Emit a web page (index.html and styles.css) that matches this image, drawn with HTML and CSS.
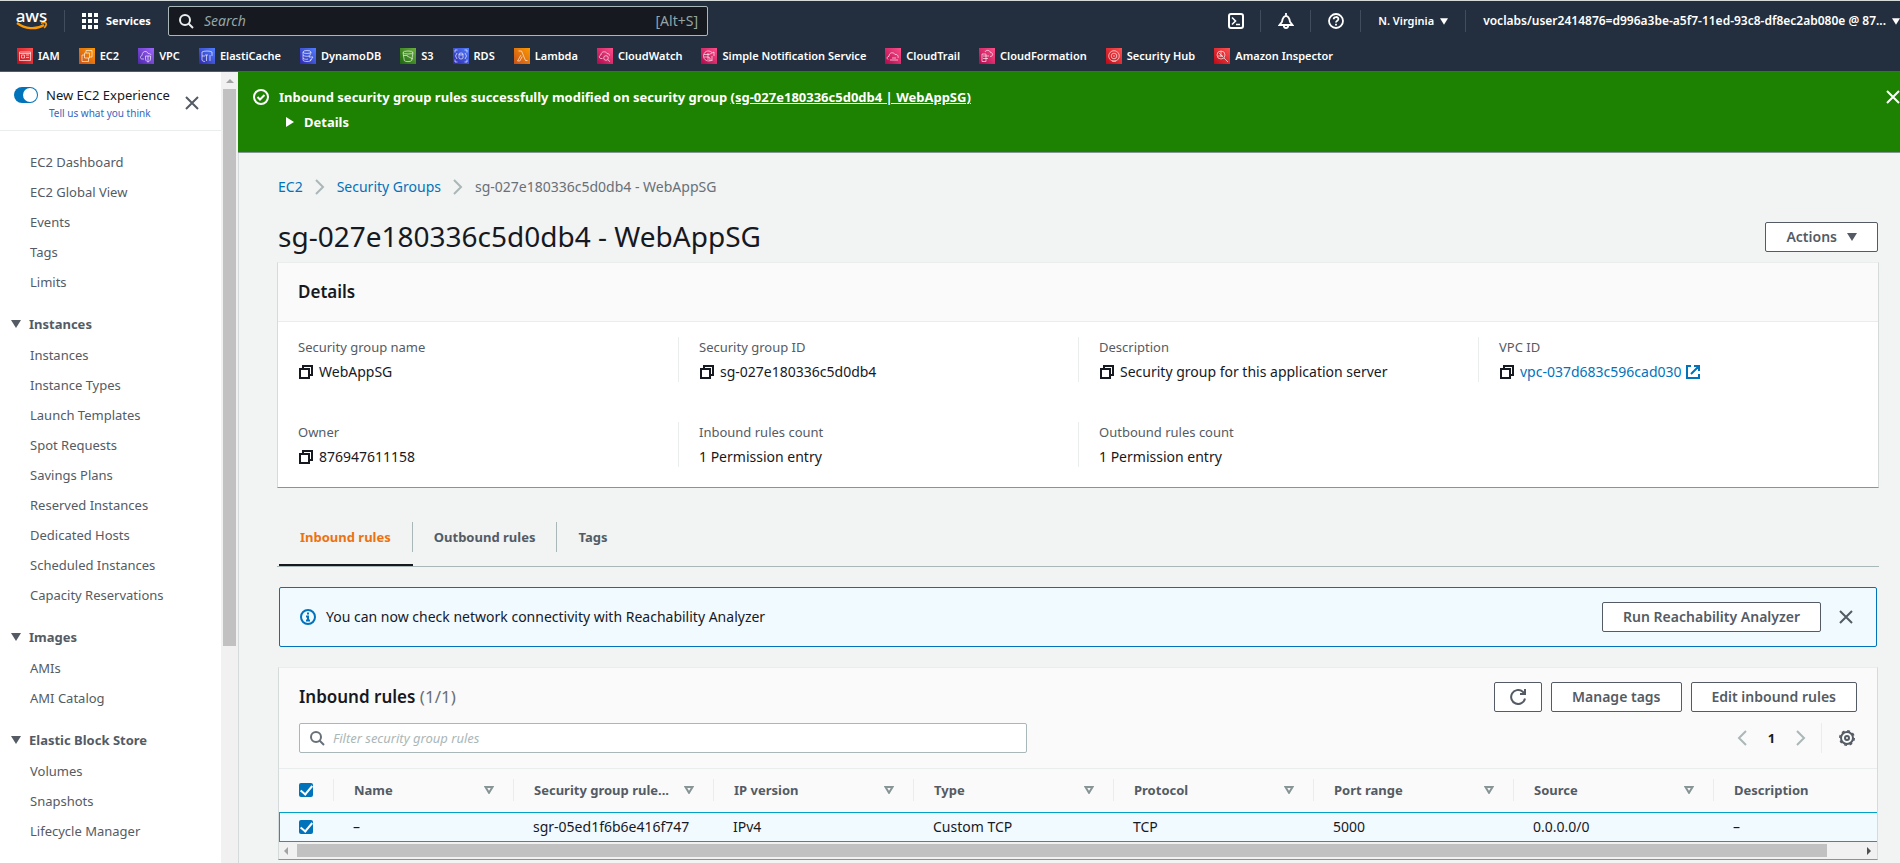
FILE: index.html
```html
<!DOCTYPE html>
<html lang="en">
<head>
<meta charset="utf-8">
<title>SecurityGroup | EC2 Management Console</title>
<link rel="stylesheet" href="styles.css">
</head>
<body>
<svg class="defs" aria-hidden="true">
  <defs>
    <linearGradient id="g-red" x1="0" y1="1" x2="1" y2="0"><stop offset="0" stop-color="#bd0816"/><stop offset="1" stop-color="#ff5252"/></linearGradient>
    <linearGradient id="g-orange" x1="0" y1="1" x2="1" y2="0"><stop offset="0" stop-color="#c8511b"/><stop offset="1" stop-color="#ff9900"/></linearGradient>
    <linearGradient id="g-purple" x1="0" y1="1" x2="1" y2="0"><stop offset="0" stop-color="#4d27a8"/><stop offset="1" stop-color="#a166ff"/></linearGradient>
    <linearGradient id="g-blue" x1="0" y1="1" x2="1" y2="0"><stop offset="0" stop-color="#2e27ad"/><stop offset="1" stop-color="#527fff"/></linearGradient>
    <linearGradient id="g-green" x1="0" y1="1" x2="1" y2="0"><stop offset="0" stop-color="#1b660f"/><stop offset="1" stop-color="#6cae3e"/></linearGradient>
    <linearGradient id="g-pink" x1="0" y1="1" x2="1" y2="0"><stop offset="0" stop-color="#b0084d"/><stop offset="1" stop-color="#ff4f8b"/></linearGradient>
    <symbol id="i-copy" viewBox="0 0 16 16"><path d="M2 5h9v9H2zM5 5V2h9v9h-3" fill="none" stroke="currentColor" stroke-width="2"/></symbol>
    <symbol id="i-close" viewBox="0 0 16 16"><path d="M2 2l12 12M14 2L2 14" fill="none" stroke="currentColor" stroke-width="2"/></symbol>
    <symbol id="i-search" viewBox="0 0 16 16"><circle cx="7" cy="7" r="5" fill="none" stroke="currentColor" stroke-width="2"/><path d="M15 15l-4.500-4.500" stroke="currentColor" stroke-width="2"/></symbol>
    <symbol id="i-right" viewBox="0 0 16 16"><path d="M4 1l7 7-7 7" fill="none" stroke="currentColor" stroke-width="2"/></symbol>
    <symbol id="i-left" viewBox="0 0 16 16"><path d="M12 1L5 8l7 7" fill="none" stroke="currentColor" stroke-width="2"/></symbol>
    <symbol id="i-down" viewBox="0 0 10 8"><path d="M0 0h10L5 8z" fill="currentColor"/></symbol>
    <symbol id="i-filter" viewBox="0 0 10 8"><path d="M1.500 1h7L5 6.800z" fill="none" stroke="currentColor" stroke-width="2"/></symbol>
  </defs>
</svg>

<header class="topnav">
  <div class="topnav-main">
    <a class="logo" href="#" aria-label="AWS">
      <span class="logo-word">aws</span>
      <svg class="logo-smile" viewBox="0 0 32 9"><path d="M1 1c8 6 19 7 27 2" fill="none" stroke="#f90" stroke-width="2.200"/><path d="M25 1.200c2-.6 4.500-.6 5 0s-.2 3-1.800 4.800" fill="none" stroke="#f90" stroke-width="1.600"/></svg>
    </a>
    <button class="services" type="button">
      <svg width="16" height="16" viewBox="0 0 16 16" fill="#fff"><path d="M0 0h4v4H0zM6 0h4v4H6zM12 0h4v4h-4zM0 6h4v4H0zM6 6h4v4H6zM12 6h4v4h-4zM0 12h4v4H0zM6 12h4v4H6zM12 12h4v4h-4z"/></svg>
      Services
    </button>
    <label class="search">
      <svg width="16" height="16"><use href="#i-search"/></svg>
      <input type="text" placeholder="Search" aria-label="Search">
      <span>[Alt+S]</span>
    </label>
    <div class="tools">
      <button type="button" class="tool" aria-label="CloudShell"><svg width="16" height="16" viewBox="0 0 16 16" fill="none" stroke="#fff" stroke-width="2"><rect x="1" y="1" width="14" height="14" rx="2"/><path d="M4 4.500L7.500 8 4 11.500M8 11.500h4" stroke-width="1.600"/></svg></button>
      <button type="button" class="tool" aria-label="Notifications"><svg width="16" height="16" viewBox="0 0 16 16" fill="none" stroke="#fff" stroke-width="1.800"><path d="M8 0v3M1.500 12h13L12 8.800C11.300 4.800 10 3 8 3S4.700 4.800 4 8.800zM5.800 12.500c0 3.300 4.400 3.300 4.400 0"/></svg></button>
      <button type="button" class="tool" aria-label="Help"><svg width="16" height="16" viewBox="0 0 16 16" fill="none" stroke="#fff" stroke-width="1.800"><circle cx="8" cy="8" r="7"/><path d="M5.700 6.300c0-3 4.700-3 4.700-.2C10.400 7.800 8 7.600 8 9.600M8 10.800v1.800"/></svg></button>
      <button type="button" class="tool text">N. Virginia <svg width="8" height="7"><use href="#i-down"/></svg></button>
      <button type="button" class="tool text account">voclabs/user2414876=d996a3be-a5f7-11ed-93c8-df8ec2ab080e @ 87... <svg width="8" height="7"><use href="#i-down"/></svg></button>
    </div>
  </div>
  <nav class="shortcuts">
    <a href="#"><svg viewBox="0 0 16 16"><rect width="16" height="16" fill="url(#g-red)"/><path d="M2.500 4h11v8.500h-11zM4.500 7h3v3h-3zM9 7h3M9 9.500h3M2.500 5.500h11"/></svg>IAM</a>
    <a href="#"><svg viewBox="0 0 16 16"><rect width="16" height="16" fill="url(#g-orange)"/><path d="M5.500 5h5v5h-5zM5.500 7H3v6.500h6.500V10M7 5V2.500h6V9h-2.500"/></svg>EC2</a>
    <a href="#"><svg viewBox="0 0 16 16"><rect width="16" height="16" fill="url(#g-purple)"/><path d="M6 11H4c-2 0-2-3 0-3.500C4 3 9 2 10 5.500c3 0 3 1.500 3 1.500M7.500 8h5v3c0 2-2.500 3-2.500 3s-2.500-1-2.500-3zM10 8v6"/></svg>VPC</a>
    <a href="#"><svg viewBox="0 0 16 16"><rect width="16" height="16" fill="url(#g-blue)"/><path d="M3 4c1.500-1.300 8.500-1.300 10 0v2M3 4v8c0 1 2 1.500 3 1.500M3 8h3M6 7h3M7.500 7v6M11 7v6M12 7h2"/></svg>ElastiCache</a>
    <a href="#"><svg viewBox="0 0 16 16"><rect width="16" height="16" fill="url(#g-blue)"/><ellipse cx="7" cy="4" rx="4" ry="1.500"/><path d="M3 4v8c0 2 8 2 8 0v-1M11 4v1M3 7c1 1.500 5 1.500 6 1M3 10c1 1.500 4 1.500 5 1M11 5l-2 4h4l-3 4"/></svg>DynamoDB</a>
    <a href="#"><svg viewBox="0 0 16 16"><rect width="16" height="16" fill="url(#g-green)"/><ellipse cx="8" cy="4.500" rx="5" ry="1.500"/><path d="M3 4.500l1.300 8c1 1.500 6.400 1.500 7.400 0l1.300-8M7 8l6 3M3.500 7.500h4"/></svg>S3</a>
    <a href="#"><svg viewBox="0 0 16 16"><rect width="16" height="16" fill="url(#g-blue)"/><ellipse cx="8" cy="6" rx="2" ry="1"/><path d="M6 6v4c0 1.300 4 1.300 4 0V6M2 4.500V2h2.500M11.500 2H14v2.500M14 11.500V14h-2.500M4.500 14H2v-2.500M4 5L2.500 8 4 11M12 5l1.500 3-1.500 3"/></svg>RDS</a>
    <a href="#"><svg viewBox="0 0 16 16"><rect width="16" height="16" fill="url(#g-orange)"/><path d="M4.500 3h3l4 9.500h2M7 7l-3.500 6h2.300l2.400-4.500"/></svg>Lambda</a>
    <a href="#"><svg viewBox="0 0 16 16"><rect width="16" height="16" fill="url(#g-pink)"/><path d="M5.500 10.500H4c-2.300 0-2-3.300 0-3.500 0-4 5-4 6-1.500 2 0 2.500 1 2.500 2"/><circle cx="9" cy="10" r="2.300"/><path d="M10.800 11.700l2.200 2"/></svg>CloudWatch</a>
    <a href="#"><svg viewBox="0 0 16 16"><rect width="16" height="16" fill="url(#g-pink)"/><path d="M11 4.500C7 1 2.500 4 2.500 8S7 14.500 11 12M3 6.500h5L13 4v4M3 9h4l2 1v3M7 5v7M11 8v5"/></svg>Simple Notification Service</a>
    <a href="#"><svg viewBox="0 0 16 16"><rect width="16" height="16" fill="url(#g-pink)"/><path d="M3 11.500c-1.500-1-1-3 1-3.200C4 4 9 4 10 6.500c3-.5 3.500 2.200 3 3.500M5 12h8M7 10h4"/></svg>CloudTrail</a>
    <a href="#"><svg viewBox="0 0 16 16"><rect width="16" height="16" fill="url(#g-pink)"/><path d="M3 6h4v7.500H3zM4 8h6M4 10.500h5M6 4c1-2.500 5-2 5.500.5 3 0 2.500 4 0 4H11"/></svg>CloudFormation</a>
    <a href="#"><svg viewBox="0 0 16 16"><rect width="16" height="16" fill="url(#g-red)"/><circle cx="8" cy="8" r="5.300"/><circle cx="8" cy="8" r="2.800"/><path d="M8 7v2M6 13h4"/></svg>Security Hub</a>
    <a href="#"><svg viewBox="0 0 16 16"><rect width="16" height="16" fill="url(#g-red)"/><circle cx="7" cy="7" r="4"/><path d="M10 10l4 4M5 5l4 4M7 3v6M4 8h5"/></svg>Amazon Inspector</a>
  </nav>
</header>

<div class="layout">
  <aside class="sidebar">
    <div class="side-content">
      <div class="side-head">
        <label class="toggle"><input type="checkbox" role="switch" checked aria-label="New EC2 Experience"></label>
        <div class="side-title"><span>New EC2 Experience</span><a href="#">Tell us what you think</a></div>
        <button class="icon-btn" type="button" aria-label="Close navigation"><svg width="16" height="16"><use href="#i-close"/></svg></button>
      </div>
      <nav class="side-nav">
        <ul>
          <li><a href="#">EC2 Dashboard</a></li><li><a href="#">EC2 Global View</a></li><li><a href="#">Events</a></li><li><a href="#">Tags</a></li><li><a href="#">Limits</a></li>
        </ul>
        <h3><svg width="10" height="8"><use href="#i-down"/></svg>Instances</h3>
        <ul>
          <li><a href="#">Instances</a></li><li><a href="#">Instance Types</a></li><li><a href="#">Launch Templates</a></li><li><a href="#">Spot Requests</a></li><li><a href="#">Savings Plans</a></li><li><a href="#">Reserved Instances</a></li><li><a href="#">Dedicated Hosts</a></li><li><a href="#">Scheduled Instances</a></li><li><a href="#">Capacity Reservations</a></li>
        </ul>
        <h3><svg width="10" height="8"><use href="#i-down"/></svg>Images</h3>
        <ul>
          <li><a href="#">AMIs</a></li><li><a href="#">AMI Catalog</a></li>
        </ul>
        <h3><svg width="10" height="8"><use href="#i-down"/></svg>Elastic Block Store</h3>
        <ul>
          <li><a href="#">Volumes</a></li><li><a href="#">Snapshots</a></li><li><a href="#">Lifecycle Manager</a></li>
        </ul>
      </nav>
    </div>
    <div class="vscroll" aria-hidden="true"><svg width="8" height="4" viewBox="0 0 8 4"><path d="M4 0l4 4H0z" fill="#a3a3a3"/></svg><div class="vthumb"></div></div>
  </aside>

  <main>
    <section class="flash">
      <svg class="flash-icon" width="16" height="16" viewBox="0 0 16 16" fill="none" stroke="#fff" stroke-width="2"><circle cx="8" cy="8" r="7"/><path d="M4.500 8l2.500 2.500 4.500-4.500"/></svg>
      <div class="flash-body">
        <p>Inbound security group rules successfully modified on security group <a href="#">(sg-027e180336c5d0db4 | WebAppSG)</a></p>
        <button type="button"><svg width="8" height="10" viewBox="0 0 8 10"><path d="M0 0l8 5-8 5z" fill="#fff"/></svg>Details</button>
      </div>
      <button class="icon-btn" type="button" aria-label="Dismiss"><svg width="16" height="16"><use href="#i-close"/></svg></button>
    </section>

    <div class="page">
      <nav class="crumbs">
        <a href="#">EC2</a><svg width="16" height="16"><use href="#i-right"/></svg><a href="#">Security Groups</a><svg width="16" height="16"><use href="#i-right"/></svg><span>sg-027e180336c5d0db4 - WebAppSG</span>
      </nav>
      <div class="title-row">
        <h1>sg-027e180336c5d0db4 - WebAppSG</h1>
        <button class="btn" type="button">Actions <svg width="10" height="8"><use href="#i-down"/></svg></button>
      </div>

      <section class="panel">
        <h2 class="panel-head">Details</h2>
        <dl class="details">
          <div><dt>Security group name</dt><dd><svg width="16" height="16"><use href="#i-copy"/></svg>WebAppSG</dd></div>
          <div><dt>Security group ID</dt><dd><svg width="16" height="16"><use href="#i-copy"/></svg>sg-027e180336c5d0db4</dd></div>
          <div><dt>Description</dt><dd><svg width="16" height="16"><use href="#i-copy"/></svg>Security group for this application server</dd></div>
          <div><dt>VPC ID</dt><dd><svg width="16" height="16"><use href="#i-copy"/></svg><a href="#">vpc-037d683c596cad030 <svg width="16" height="16" viewBox="0 0 16 16" fill="none" stroke="currentColor" stroke-width="2"><path d="M6 2H2v12h12v-4M9 2h5v5M14 2L6 10"/></svg></a></dd></div>
          <div><dt>Owner</dt><dd><svg width="16" height="16"><use href="#i-copy"/></svg>876947611158</dd></div>
          <div><dt>Inbound rules count</dt><dd>1 Permission entry</dd></div>
          <div><dt>Outbound rules count</dt><dd>1 Permission entry</dd></div>
        </dl>
      </section>

      <div class="tabs" role="tablist">
        <button type="button" role="tab" aria-selected="true"><span>Inbound rules</span></button>
        <button type="button" role="tab" aria-selected="false"><span>Outbound rules</span></button>
        <button type="button" role="tab" aria-selected="false"><span>Tags</span></button>
      </div>

      <section class="info">
        <svg width="16" height="16" viewBox="0 0 16 16" fill="none" stroke="#0073bb" stroke-width="2"><circle cx="8" cy="8" r="7"/><path d="M8 3.500v2M6 7.500h2v4M6 11.500h4"/></svg>
        <p>You can now check network connectivity with Reachability Analyzer</p>
        <button class="btn" type="button">Run Reachability Analyzer</button>
        <button class="icon-btn" type="button" aria-label="Dismiss"><svg width="16" height="16"><use href="#i-close"/></svg></button>
      </section>

      <section class="panel rules">
        <div class="rules-head">
          <h2>Inbound rules <span>(1/1)</span></h2>
          <div class="actions">
            <button class="btn refresh" type="button" aria-label="Refresh"><svg width="16" height="16" viewBox="0 0 16 16" fill="none" stroke="currentColor" stroke-width="2"><path d="M15 9.500A7 7 0 1 1 12.500 2.500L15 5M15 0v5h-5"/></svg></button>
            <button class="btn" type="button">Manage tags</button>
            <button class="btn" type="button">Edit inbound rules</button>
          </div>
        </div>
        <div class="rules-tools">
          <label class="filter"><svg width="16" height="16"><use href="#i-search"/></svg><input type="text" placeholder="Filter security group rules" aria-label="Filter security group rules"></label>
          <div class="pager">
            <button type="button" aria-label="Previous page"><svg width="16" height="16"><use href="#i-left"/></svg></button>
            <button type="button" class="current">1</button>
            <button type="button" aria-label="Next page"><svg width="16" height="16"><use href="#i-right"/></svg></button>
            <button type="button" class="gear" aria-label="Preferences"><svg width="16" height="16" viewBox="0 0 16 16" fill="none" stroke="currentColor"><circle cx="8" cy="8" r="6" stroke-width="2"/><circle cx="8" cy="8" r="7.200" stroke-width="1.600" stroke-dasharray="2.827 2.827"/><circle cx="8" cy="8" r="2" stroke-width="2"/></svg></button>
          </div>
        </div>
        <div class="table-wrap">
          <table>
            <colgroup><col class="c-check"><col class="c-name"><col class="c-std"><col class="c-std"><col class="c-std"><col class="c-std"><col class="c-std"><col class="c-std"><col class="c-std"></colgroup>
            <thead>
              <tr>
                <th><input type="checkbox" checked aria-label="Select all"></th>
                <th><div><span>Name</span><svg width="10" height="8"><use href="#i-filter"/></svg></div></th>
                <th><div><span>Security group rule...</span><svg width="10" height="8"><use href="#i-filter"/></svg></div></th>
                <th><div><span>IP version</span><svg width="10" height="8"><use href="#i-filter"/></svg></div></th>
                <th><div><span>Type</span><svg width="10" height="8"><use href="#i-filter"/></svg></div></th>
                <th><div><span>Protocol</span><svg width="10" height="8"><use href="#i-filter"/></svg></div></th>
                <th><div><span>Port range</span><svg width="10" height="8"><use href="#i-filter"/></svg></div></th>
                <th><div><span>Source</span><svg width="10" height="8"><use href="#i-filter"/></svg></div></th>
                <th><div><span>Description</span></div></th>
              </tr>
            </thead>
            <tbody>
              <tr>
                <td><input type="checkbox" checked aria-label="Select sgr-05ed1f6b6e416f747"></td>
                <td>–</td><td>sgr-05ed1f6b6e416f747</td><td>IPv4</td><td>Custom TCP</td><td>TCP</td><td>5000</td><td>0.0.0.0/0</td><td>–</td>
              </tr>
            </tbody>
          </table>
        </div>
        <div class="hscroll" aria-hidden="true"><svg width="4" height="8" viewBox="0 0 4 8"><path d="M4 0v8L0 4z" fill="#a3a3a3"/></svg><div class="htrack"><div class="hthumb"></div></div><svg width="4" height="8" viewBox="0 0 4 8"><path d="M0 0v8l4-4z" fill="#505050"/></svg></div>
      </section>
    </div>
  </main>
</div>
</body>
</html>
```
FILE: styles.css
```css
:root {
  --ink: #16191f;
  --muted: #545b64;
  --link: #0073bb;
  --line: #eaeded;
  --nav: #232f3e;
}
* { box-sizing: border-box; }
body {
  margin: 0;
  height: 100vh;
  display: flex;
  flex-direction: column;
  overflow: hidden;
  font: 14px/20px "Noto Sans", "Open Sans", sans-serif;
  color: var(--ink);
  background: #f2f3f3;
}
h1, h2, h3, p, ul, dl, dd { margin: 0; padding: 0; }
ul { list-style: none; }
a { color: var(--link); text-decoration: none; }
svg { flex: none; display: block; }
button, input { font: inherit; color: inherit; }
button { background: none; border: 0; padding: 0; cursor: pointer; }
.defs { position: absolute; width: 0; height: 0; }

/* Top navigation */
.topnav {
  background: var(--nav);
  border-top: 1px solid #d5dbdb;
  border-bottom: 1px solid #545b64;
  color: #fff;
  font-size: 11px;
  font-weight: 600;
}
.topnav-main { display: flex; align-items: center; height: 40px; padding-left: 16px; }
.logo {
  display: flex;
  flex-direction: column;
  align-items: center;
  width: 49px;
  height: 22px;
  padding-right: 17px;
  border-right: 1px solid #414d5c;
  color: #fff;
}
.logo-word { font-size: 17px; line-height: 12px; font-weight: 500; }
.logo-smile { width: 32px; height: 9px; }
.services { display: flex; align-items: center; gap: 8px; width: 103px; padding-left: 17px; font-weight: 700; }
.search {
  display: flex;
  align-items: center;
  gap: 10px;
  width: 540px;
  height: 30px;
  padding: 0 9px;
  border: 1px solid #aab7b8;
  border-radius: 2px;
  background: #16191f;
  color: #95a5a6;
  font-size: 14px;
  font-weight: 400;
}
.search svg { color: #eaeded; }
.search input { flex: 1; min-width: 0; border: 0; padding: 0; background: none; outline: 0; }
.search input::placeholder { color: #95a5a6; font-style: italic; }
.tools { display: flex; margin-left: auto; }
.tool { display: flex; align-items: center; gap: 6px; height: 22px; padding: 0 16px 0 17px; border-right: 1px solid #414d5c; white-space: nowrap; }
.tool.text { padding: 0 17px; }
.tool.account { padding-right: 0; border-right: 0; font-size: 12px; }
.shortcuts { display: flex; gap: 19px; height: 30px; align-items: center; padding-left: 17px; }
.shortcuts a { display: flex; align-items: center; gap: 5px; color: #fff; white-space: nowrap; }
.shortcuts svg { width: 16px; height: 16px; fill: none; stroke: #fff; stroke-width: 0.7; stroke-opacity: 0.9; }
.shortcuts rect { stroke: none; }

/* Side navigation */
.layout { flex: 1; display: flex; min-height: 0; }
.sidebar { flex: none; display: flex; width: 239px; background: #fff; border-right: 1px solid #d5dbdb; overflow: hidden; }
.side-content { flex: 1; min-width: 0; }
.side-head { display: flex; height: 59px; padding: 13px 21px 0 14px; border-bottom: 1px solid var(--line); }
.toggle { padding-top: 2px; }
.toggle input {
  appearance: none;
  display: flex;
  justify-content: flex-end;
  width: 24px;
  height: 16px;
  margin: 0 8px 0 0;
  padding: 1px;
  border-radius: 8px;
  background: var(--link);
}
.toggle input::after { content: ""; width: 14px; height: 14px; border-radius: 50%; background: #fff; }
.side-title { flex: 1; min-width: 0; display: flex; flex-direction: column; white-space: nowrap; font-size: 13px; }
.side-title a { padding-left: 3px; font-size: 10px; line-height: 16px; color: #3367bd; }
.icon-btn { color: var(--muted); }
.side-head .icon-btn { align-self: flex-start; padding-top: 10px; }
.side-nav { padding-top: 16px; font-size: 13px; color: var(--muted); }
.side-nav a { display: block; padding-left: 30px; line-height: 30px; color: inherit; }
.side-nav h3 { display: flex; align-items: center; gap: 8px; height: 20px; margin: 17px 0 5px; padding: 0 0 1px 11px; font-size: 13px; font-weight: 700; }
.side-nav h3 + ul { padding-top: 1px; }
.vscroll { width: 17px; background: #f1f1f1; padding-top: 7px; display: flex; flex-direction: column; align-items: center; gap: 6px; }
.vthumb { width: 13px; height: 71%; background: #c1c1c1; }

/* Success banner */
main { flex: 1; min-width: 0; margin-left: -1px; }
.flash { display: flex; gap: 10px; min-height: 81px; padding: 15px 0 20px 15px; background: #1d8102; border-bottom: 1px solid #879596; color: #fff; font-size: 13px; font-weight: 700; }
.flash-icon { margin-top: 2px; }
.flash-body { flex: 1; min-width: 0; }
.flash-body a { color: #fff; text-decoration: underline; }
.flash-body button { display: flex; align-items: center; gap: 10px; margin-top: 5px; padding-left: 7px; }
.flash .icon-btn { align-self: flex-start; padding-top: 2px; margin-right: -1px; color: #fff; }

/* Page header */
.page { padding: 24px 21px 0 39px; }
.crumbs { display: flex; align-items: center; gap: 9px; padding-left: 1px; color: #687078; }
.crumbs svg { color: #aab7b8; }
.title-row { display: flex; justify-content: space-between; align-items: center; height: 40px; margin: 20px 1px 5px; }
h1 { padding-bottom: 2px; font-size: 28px; line-height: 38px; font-weight: 400; }
.btn {
  display: flex;
  align-items: center;
  justify-content: center;
  gap: 10px;
  height: 30px;
  padding: 0 20px;
  border: 1px solid var(--muted);
  border-radius: 2px;
  background: #fff;
  color: var(--muted);
  font-size: 14px;
  font-weight: 600;
  white-space: nowrap;
}

/* Panels */
.panel { background: #fff; border: 1px solid #d5dbdb; border-top-color: var(--line); border-bottom-color: #879596; }
h2 { font-size: 17px; line-height: 24px; font-weight: 600; }
.panel-head { padding: 17px 20px; border-bottom: 1px solid var(--line); background: #fafafa; }
.details { display: grid; grid-template-columns: repeat(4, 1fr); row-gap: 40px; padding: 15px 0 20px; }
.details > div { padding-left: 20px; border-left: 1px solid var(--line); }
.details > div:nth-child(4n + 1) { border-left: 0; }
.details dt { color: var(--muted); font-size: 13px; }
.details dd { display: flex; align-items: center; gap: 5px; margin-top: 5px; }
.details dd a { display: flex; align-items: center; gap: 3px; }

/* Tabs */
.tabs { display: flex; margin-top: 34px; padding-left: 2px; border-bottom: 1px solid #aab7b8; font-size: 13px; font-weight: 700; color: var(--muted); }
.tabs button { padding-bottom: 12px; border-bottom: 2px solid transparent; }
.tabs span { display: block; padding: 5px 21px; border-right: 1px solid #aab7b8; }
.tabs button:last-child span { border-right: 0; }
.tabs [aria-selected="true"] { border-bottom-color: var(--ink); color: #ec7211; }

/* Info alert */
.info { display: flex; align-items: center; gap: 10px; margin: 20px 2px 0; padding: 14px 22px 14px 20px; border: 1px solid var(--link); border-radius: 2px; background: #f1faff; }
.info p { flex: 1; }
.info .icon-btn { margin-left: 7px; }

/* Rules panel */
.rules { margin: 20px 1px 0; background: #fafafa; }
.rules-head, .rules-tools { display: flex; justify-content: space-between; align-items: center; padding: 0 20px; }
.rules-head { padding-top: 14px; }
.rules-head h2 span { font-weight: 400; color: #687078; }
.actions { display: flex; gap: 9px; }
.refresh { width: 48px; padding: 0; }
.rules-tools { padding-top: 11px; padding-bottom: 15px; }
.filter { display: flex; align-items: center; gap: 8px; flex: 0 1 728px; height: 30px; padding: 0 9px; border: 1px solid #aab7b8; border-radius: 2px; background: #fff; color: #687078; }
.filter input { flex: 1; min-width: 0; border: 0; padding: 0; background: none; outline: 0; font-size: 13px; }
.filter input::placeholder { color: #aab7b8; font-style: italic; }
.pager { display: flex; align-items: center; height: 30px; color: #aab7b8; }
.pager .current { width: 43px; color: var(--ink); font-size: 13px; font-weight: 700; }
.pager .gear { height: 30px; margin-left: 12px; padding: 0 2px 0 17px; border-left: 1px solid var(--line); color: var(--muted); }
.table-wrap { overflow: hidden; border-top: 1px solid var(--line); }
table { width: 1634px; border-spacing: 0; table-layout: fixed; }
.c-check { width: 54px; }
.c-name { width: 180px; }
.c-std { width: 200px; }
th, td { padding: 0; text-align: left; white-space: nowrap; }
th { height: 43px; padding-bottom: 1px; color: var(--muted); font-size: 13px; font-weight: 700; }
th:first-child { padding-left: 20px; }
th div { display: flex; align-items: center; justify-content: space-between; height: 22px; padding: 0 19px 0 20px; border-left: 1px solid var(--line); }
th svg { color: #879596; }
td { height: 30px; padding-left: 20px; border: solid #00a1c9; border-width: 1px 0; background: #f1faff; }
td:first-child { padding-left: 19px; border-left-width: 1px; }
th input, td input { appearance: none; display: flex; justify-content: center; width: 14px; height: 14px; margin: 0; border-radius: 2px; background: var(--link); }
th input::after, td input::after { content: ""; width: 5px; height: 10px; border: solid #fff; border-width: 0 2px 2px 0; transform: rotate(40deg); }
.hscroll { display: flex; align-items: center; gap: 9px; height: 17px; padding: 0 6px 0 5px; background: #f1f1f1; }
.htrack { flex: 1; }
.hthumb { width: 98%; height: 13px; background: #c1c1c1; }
```
